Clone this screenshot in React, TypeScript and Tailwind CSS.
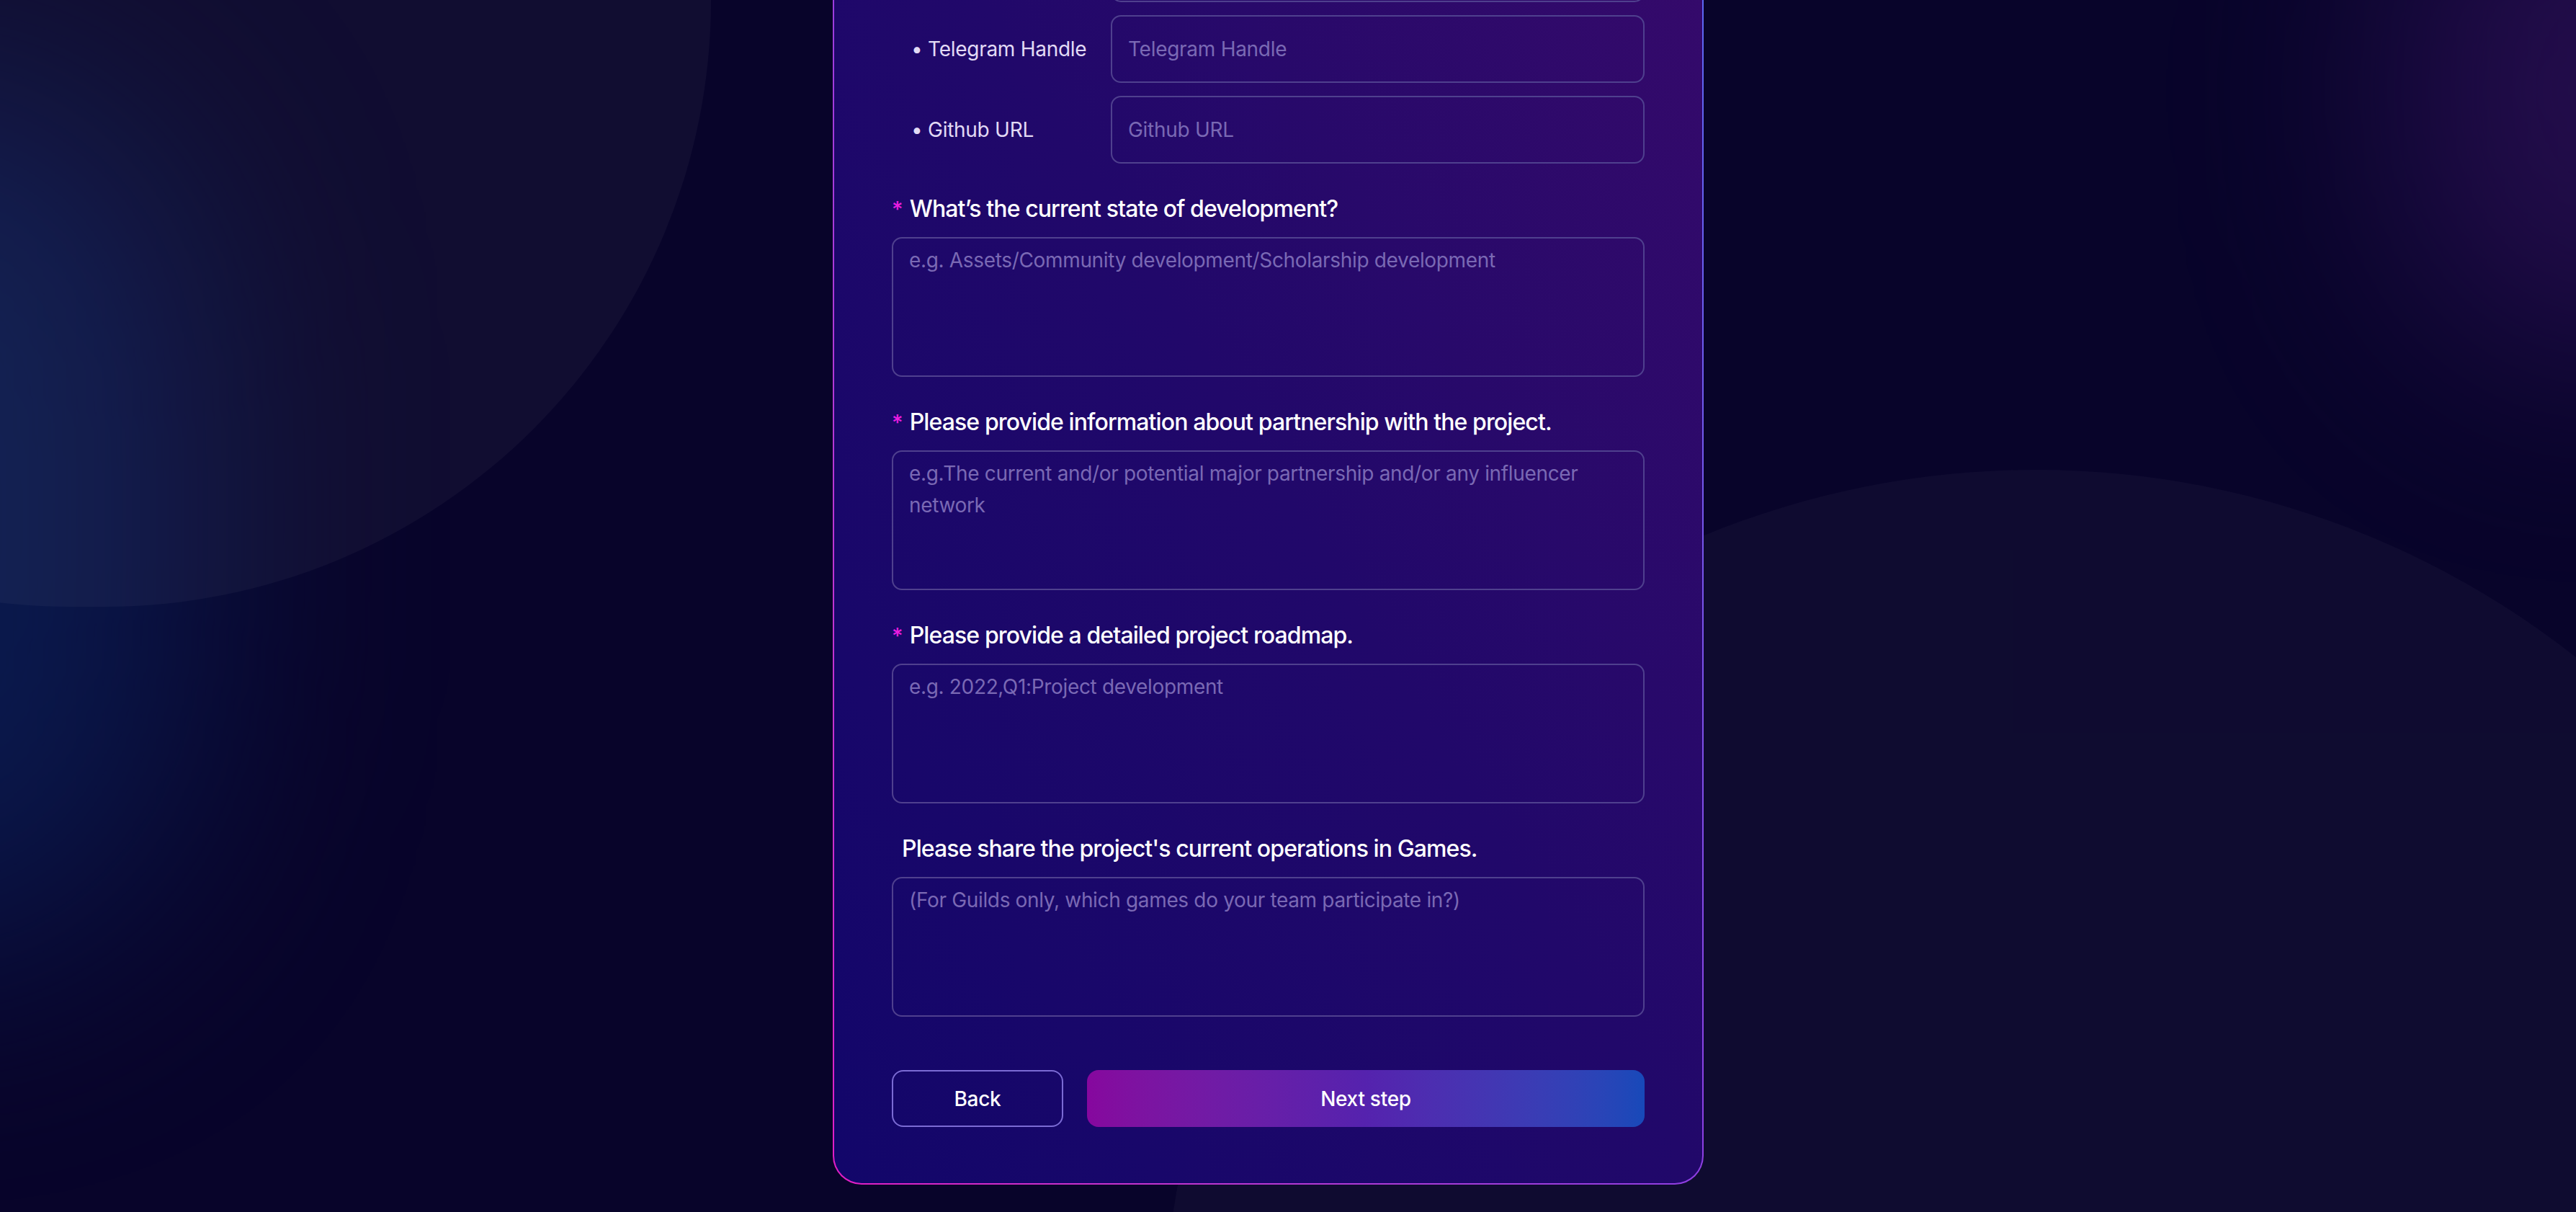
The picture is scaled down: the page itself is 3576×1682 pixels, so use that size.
import React from 'react';

const inputClass =
  'h-[94px] w-full rounded-[14px] border-2 border-[#4f408e] bg-transparent px-[22px] text-[28px] tracking-[-0.01em] text-white outline-none placeholder:text-[#7a69b4]';

const textareaClass =
  'mt-[19px] block h-[194px] w-full resize-none rounded-[14px] border-2 border-[#4f408e] bg-transparent px-[22px] pt-[8px] text-[28px] leading-[44px] tracking-[-0.012em] text-white outline-none placeholder:text-[#7a69b4]';

function Label({ required, children }: { required?: boolean; children: React.ReactNode }) {
  return (
    <label
      className={`block text-[32px] font-medium leading-[40px] tracking-[-0.028em] text-white ${required ? '' : 'pl-[14px]'}`}
    >
      {required && <span className="mr-[10px] text-[30px] leading-none text-[#e81ce0]">*</span>}
      {children}
    </label>
  );
}

function SocialRow({ label }: { label: string }) {
  return (
    <div className="flex items-center">
      <span className="w-[304px] shrink-0 pl-[27px] text-[28px] tracking-[-0.01em] text-[#e2daf5]">• {label}</span>
      <input className={inputClass} placeholder={label} />
    </div>
  );
}

function Question({ label, placeholder, required = true }: { label: string; placeholder: string; required?: boolean }) {
  return (
    <div className="mt-[43px]">
      <Label required={required}>{label}</Label>
      <textarea className={textareaClass} placeholder={placeholder} />
    </div>
  );
}

export default function App() {
  return (
    <div className="relative h-screen w-full overflow-hidden bg-[#08042a] font-['Inter',sans-serif]">
      {/* background decoration */}
      <div className="pointer-events-none absolute left-[-450px] top-[120px] h-[1200px] w-[700px] rounded-full bg-[#0d2c6c] opacity-55 blur-[170px]"></div>
      <div className="pointer-events-none absolute right-[-320px] top-[-250px] h-[750px] w-[560px] rounded-full bg-[#3b1568] opacity-55 blur-[150px]"></div>
      <div className="pointer-events-none absolute left-[-743px] top-[-842px] h-[1684px] w-[1730px] rounded-full bg-white/[0.035]"></div>
      <div className="pointer-events-none absolute left-[1615px] top-[652px] h-[2422px] w-[2422px] rounded-full bg-white/[0.03]"></div>

      <div className="relative z-10 flex h-full flex-col items-center justify-end pb-[38px] pr-[55px]">
        <div className="w-[1209px] shrink-0 rounded-[40px] bg-gradient-to-tr from-[#e21cc4] via-[#8e3ee2] to-[#4c6ef8] p-[2px]">
          <div className="rounded-[38px] bg-gradient-to-tr from-[#12066a] via-[#21086a] to-[#38096b] px-[80px] pb-[78px] pt-[80px]">
            <Label required>Social media</Label>
            <div className="mt-[19px] flex flex-col gap-[18px]">
              <SocialRow label="Twitter" />
              <SocialRow label="Discord" />
              <SocialRow label="Telegram Handle" />
              <SocialRow label="Github URL" />
            </div>

            <Question
              label="What’s the current state of development?"
              placeholder="e.g. Assets/Community development/Scholarship development"
            />
            <Question
              label="Please provide information about partnership with the project."
              placeholder="e.g.The current and/or potential major partnership and/or any influencer network"
            />
            <Question
              label="Please provide a detailed project roadmap."
              placeholder="e.g. 2022,Q1:Project development"
            />
            <Question
              required={false}
              label="Please share the project's current operations in Games."
              placeholder="(For Guilds only, which games do your team participate in?)"
            />

            <div className="mt-[74px] flex gap-[33px]">
              <button className="h-[79px] w-[238px] rounded-[16px] border-2 border-[#7b6bd4] text-[28px] font-medium tracking-[-0.01em] text-white">
                Back
              </button>
              <button className="h-[79px] flex-1 rounded-[16px] bg-gradient-to-r from-[#86079e] via-[#5522ae] to-[#1749b9] text-[28px] font-medium tracking-[-0.01em] text-white">
                Next step
              </button>
            </div>
          </div>
        </div>
      </div>
    </div>
  );
}
